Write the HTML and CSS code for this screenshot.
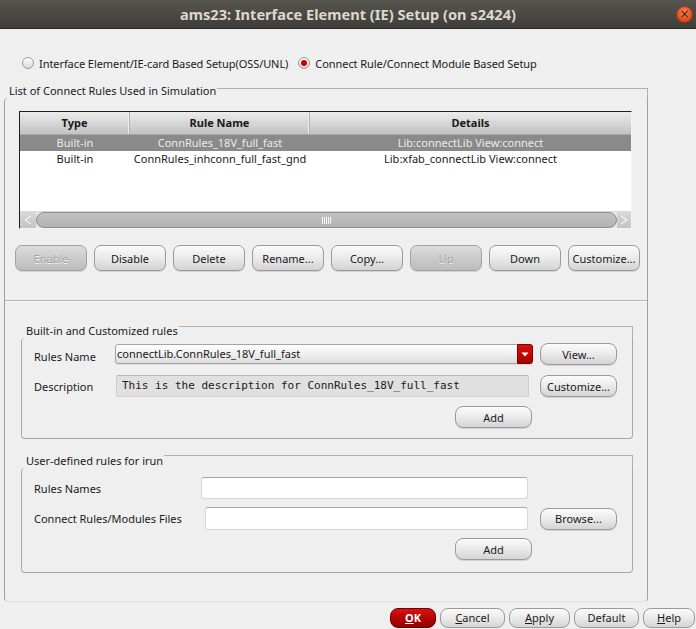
FILE: index.html
```html
<!DOCTYPE html>
<html>
<head>
<meta charset="utf-8">
<link rel="stylesheet" href="styles.css">
</head>
<body>
<div class="window">
  <div class="titlebar">
    <span></span>
    <span class="title">ams23: Interface Element (IE) Setup (on s2424)</span>
    <span class="close">×</span>
  </div>
  <div class="content">
    <div class="radios">
      <div class="radio"><span class="rb"></span><span>Interface Element/IE-card Based Setup(OSS/UNL)</span></div>
      <div class="radio"><span class="rb on"></span><span>Connect Rule/Connect Module Based Setup</span></div>
    </div>

    <div class="group outer">
      <div class="ghead"><span class="gtitle">List of Connect Rules Used in Simulation</span><span class="gline"></span></div>
      <div class="gbody outer-body">
        <div class="table">
          <div class="thead">
            <div class="th c1">Type</div>
            <div class="th c2">Rule Name</div>
            <div class="th c3">Details</div>
          </div>
          <div class="tr sel">
            <div class="td c1">Built-in</div>
            <div class="td c2">ConnRules_18V_full_fast</div>
            <div class="td c3">Lib:connectLib View:connect</div>
          </div>
          <div class="tr">
            <div class="td c1">Built-in</div>
            <div class="td c2">ConnRules_inhconn_full_fast_gnd</div>
            <div class="td c3">Lib:xfab_connectLib View:connect</div>
          </div>
          <div class="tfill"></div>
          <div class="hscroll">
            <div class="arrow left"><svg width="8" height="10" viewBox="0 0 8 10"><path d="M7 1 L1 5 L7 9" fill="none" stroke="#fff" stroke-width="1"/></svg></div>
            <div class="track"><span class="grip"></span></div>
            <div class="arrow right"><svg width="8" height="10" viewBox="0 0 8 10"><path d="M1 1 L7 5 L1 9" fill="none" stroke="#fff" stroke-width="1"/></svg></div>
          </div>
        </div>

        <div class="btnrow">
          <button class="btn w72 disabled">Enable</button>
          <button class="btn w72">Disable</button>
          <button class="btn w72">Delete</button>
          <button class="btn w72">Rename...</button>
          <button class="btn w72">Copy...</button>
          <button class="btn w72 disabled">Up</button>
          <button class="btn w72">Down</button>
          <button class="btn w72">Customize...</button>
        </div>

        <div class="sep"></div>

        <div class="group inner g1">
          <div class="ghead"><span class="gtitle">Built-in and Customized rules</span><span class="gline"></span></div>
          <div class="gbody inner-body b1">
            <div class="row">
              <span class="label l1 low">Rules Name</span>
              <div class="combo"><span class="combo-text">connectLib.ConnRules_18V_full_fast</span><span class="combo-btn"><svg width="8" height="5" viewBox="0 0 8 5"><path d="M0.5 0.5 H7.5 L4 4.5 Z" fill="#fff"/></svg></span></div>
              <button class="btn w77 ml7">View...</button>
            </div>
            <div class="row r2">
              <span class="label l1">Description</span>
              <div class="desc">This is the description for ConnRules_18V_full_fast</div>
              <button class="btn w77 ml11">Customize...</button>
            </div>
            <div class="row r3">
              <button class="btn w77 add">Add</button>
            </div>
          </div>
        </div>

        <div class="group inner g2">
          <div class="ghead"><span class="gtitle">User-defined rules for irun</span><span class="gline"></span></div>
          <div class="gbody inner-body b2">
            <div class="row">
              <span class="label l2">Rules Names</span>
              <div class="input i1"></div>
            </div>
            <div class="row r2b">
              <span class="label l3">Connect Rules/Modules Files</span>
              <div class="input i2"></div>
              <button class="btn w77 ml12">Browse...</button>
            </div>
            <div class="row r3b">
              <button class="btn w77 add">Add</button>
            </div>
          </div>
        </div>
      </div>
    </div>

    <div class="footer">
      <button class="fbtn ok"><u>O</u>K</button>
      <button class="fbtn w65"><u>C</u>ancel</button>
      <button class="fbtn w61"><u>A</u>pply</button>
      <button class="fbtn w65">Default</button>
      <button class="fbtn w52"><u>H</u>elp</button>
    </div>
  </div>
</div>
</body>
</html>
```

FILE: styles.css
```css
* { box-sizing: border-box; }
html, body {
  margin: 0;
  padding: 0;
  width: 696px;
  height: 629px;
  overflow: hidden;
  background: #efefef;
}
body {
  font-family: "Noto Sans", "Open Sans", sans-serif;
  font-size: 11px;
  color: #1a1a1a;
}
.window { width: 696px; height: 629px; display: flex; flex-direction: column; }

/* title bar */
.titlebar {
  height: 29px;
  flex: none;
  display: grid;
  grid-template-columns: 1fr auto 1fr;
  align-items: center;
  background: linear-gradient(#57554f, #3e3d39);
  border-bottom: 1px solid #2d2c29;
}
.title {
  font-family: "Noto Sans", sans-serif;
  font-weight: bold;
  font-size: 14.6px;
  color: #dcd8cf;
}
.close {
  justify-self: end;
  margin-right: 3px;
  width: 17px;
  height: 17px;
  border-radius: 50%;
  background: radial-gradient(circle at 50% 35%, #f6885a, #de4a18 70%);
  border: 1px solid #9a3a14;
  color: #4a1a08;
  font-size: 12px;
  line-height: 14px;
  text-align: center;
  font-family: "DejaVu Sans", sans-serif;
}

.content { flex: 1; display: flex; flex-direction: column; }

/* radios */
.radios {
  display: flex;
  gap: 10px;
  padding: 26px 0 0 22px;
  height: 43px;
  letter-spacing: -0.07px;
}
.radio { display: flex; align-items: center; gap: 5px; height: 16px; }
.rb {
  width: 12px; height: 12px;
  border-radius: 50%;
  border: 1px solid #9a9a9a;
  background: linear-gradient(#ffffff, #d8d8d8);
  display: flex; align-items: center; justify-content: center;
}
.rb.on::after {
  content: "";
  width: 6px; height: 6px; border-radius: 50%;
  background: #d00000;
}

/* groups */
.group { display: flex; flex-direction: column; }
.ghead { display: flex; height: 14px; }
.gtitle { line-height: 14px; padding-left: 5px; padding-right: 1px; white-space: nowrap; }
.gline {
  flex: 1;
  border-top: 1px solid #b0b0b0;
  border-right: 1px solid #b0b0b0;
  border-top-right-radius: 4px;
}
.gbody {
  border-left: 1px solid #a8a8a8;
  border-right: 1px solid #a8a8a8;
  border-bottom: 1px solid #a8a8a8;
  border-bottom-left-radius: 4px;
  border-bottom-right-radius: 4px;
  border-top-left-radius: 4px;
}
.outer { margin: 12px 0 0 4px; width: 644px; }
.outer .ghead { height: 14px; }
.outer .gline { margin-top: 4px; border-top-right-radius: 0; }
.outer-body {
  padding: 13px 0 28px 0;
  display: flex;
  flex-direction: column;
  border-bottom-color: #e2e2e2;
  border-left-color: #a0a0a0;
  border-right-color: #a0a0a0;
}

/* table */
.table {
  margin-left: 14px;
  width: 613px;
  height: 118px;
  border-top: 1px solid #202020;
  border-left: 1px solid #202020;
  border-right: 1px solid #f4f4f4;
  border-bottom: 1px solid #f4f4f4;
  background: #ffffff;
  display: flex;
  flex-direction: column;
}
.thead {
  display: flex;
  height: 23px;
  background: linear-gradient(#ececec, #d2d2d2 60%, #c2c2c2);
  border-bottom: 1px solid #a8a8a8;
}
.th {
  font-weight: bold;
  text-align: center;
  line-height: 22px;
  border-right: 1px solid #b4b4b4;
  box-shadow: inset -1px 0 0 #ececec;
}
.th.c3 { border-right: none; box-shadow: none; }
.c1 { width: 110px; flex: none; }
.c2 { width: 180px; flex: none; }
.c3 { flex: 1; }
.tr { display: flex; height: 16px; }
.td { text-align: center; line-height: 16px; white-space: nowrap; }
.tr.sel { background: #8a8a8a; color: #ececec; }
.tfill { flex: 1; }
.hscroll {
  display: flex;
  height: 17px;
  background: #e8e8e8;
  border-top: 1px solid #d8d8d8;
}
.arrow {
  width: 16px;
  display: flex; align-items: center; justify-content: center;
  background: linear-gradient(#d8d8d8, #c4c4c4);
}
.arrow.right { width: 14px; }
.track {
  flex: 1;
  background: linear-gradient(#c2c2c2, #b2b2b2);
  border: 1px solid #8e8e8e;
  border-radius: 8px;
  display: flex;
  justify-content: center;
  align-items: center;
}
.grip {
  width: 9px; height: 7px;
  background: repeating-linear-gradient(90deg, #ffffff 0 1px, transparent 1px 2px);
  opacity: 0.9;
}

/* buttons */
.btn {
  font-family: "Noto Sans", sans-serif;
  font-size: 11px;
  color: #1a1a1a;
  height: 26px;
  padding: 0;
  border: 1px solid #9a9a9a;
  border-radius: 7px;
  background: linear-gradient(#fbfbfb, #eaeaea 50%, #d4d4d4);
  box-shadow: 0 1px 0 rgba(0,0,0,0.12);
  white-space: nowrap;
}
.btn.disabled {
  background: linear-gradient(#dcdcdc, #c8c8c8 60%, #bcbcbc);
  color: #a4a4a4;
  text-shadow: 0 1px 0 #f4f4f4;
  border-color: #a2a2a2;
}
.w72 { width: 72px; flex: none; }
.w77 { width: 77px; height: 22px; flex: none; border-radius: 8px; }
.btnrow {
  display: flex;
  gap: 7px;
  margin: 16px 0 0 10px;
}
.sep {
  margin-top: 29px;
  height: 1px;
  background: #b4b4b4;
  border-bottom: 1px solid #f8f8f8;
  box-sizing: content-box;
}

/* inner groups */
.inner { margin-left: 16px; width: 612px; }
.g1 { margin-top: 22px; }
.g1 .gline { margin-top: 2px; }
.g2 { margin-top: 15px; }
.g2 .gline { margin-top: 1px; }
.inner-body { display: flex; flex-direction: column; padding-left: 12px; }
.b1 { padding-top: 5px; padding-bottom: 9px; height: 101px; }
.b2 { padding-top: 9px; padding-bottom: 12px; height: 105px; }
.row { display: flex; align-items: center; height: 22px; }
.r2 { margin-top: 10px; }
.r3 { margin-top: 9px; }
.r2b { margin-top: 8px; height: 23px; }
.r3b { margin-top: 8px; }
.label { flex: none; white-space: nowrap; }
.low { padding-top: 5px; }
.l1 { width: 81px; }
.l2 { width: 167px; }
.l3 { width: 171px; }
.ml7 { margin-left: 7px; }
.ml11 { margin-left: 11px; }
.ml12 { margin-left: 12px; }
.add { margin-left: 421px; }

.combo {
  width: 418px;
  height: 20px;
  display: flex;
  border: 1px solid #a4a4a4;
  border-radius: 3px;
  background: linear-gradient(#ffffff, #ececec 60%, #dcdcdc);
  box-shadow: 0 1px 0 rgba(0,0,0,0.08);
}
.combo-text { flex: 1; line-height: 17px; padding-left: 1px; }
.combo-btn {
  width: 16px;
  margin: -1px -1px -1px 0;
  background: linear-gradient(#d81010, #a80000);
  border: 1px solid #800000;
  border-radius: 0 3px 3px 0;
  display: flex; align-items: center; justify-content: center;
}
.desc {
  margin-left: 1px;
  width: 413px;
  height: 22px;
  background: #e0e0e0;
  border: 1px solid #cfcfcf;
  border-top-color: #b8b8b8;
  border-radius: 2px;
  font-family: "DejaVu Sans Mono", "Liberation Mono", monospace;
  font-size: 11px;
  line-height: 20px;
  padding-left: 5px;
  white-space: nowrap;
  color: #1a1a1a;
}
.input {
  height: 22px;
  background: #ffffff;
  border: 1px solid #d6d6d6;
  border-top-color: #a8a8a8;
  border-radius: 3px;
}
.i1 { width: 327px; }
.i2 { width: 323px; height: 23px; }

/* footer */
.footer {
  display: flex;
  justify-content: flex-end;
  gap: 4px;
  padding-right: 1px;
  margin-top: 6px;
}
.fbtn {
  font-family: "Noto Sans", sans-serif;
  font-size: 11px;
  color: #1a1a1a;
  height: 20px;
  line-height: 16px;
  padding: 0;
  border: 1px solid #9a9a9a;
  border-radius: 8px;
  background: linear-gradient(#fbfbfb, #eaeaea 50%, #d4d4d4);
  flex: none;
}
.fbtn.ok {
  width: 46px;
  background: linear-gradient(#d81414, #b00000 60%, #980000);
  border-color: #6a0000;
  color: #ffffff;
  font-weight: bold;
}
.w65 { width: 65px; }
.w61 { width: 61px; }
.w52 { width: 52px; }
```
